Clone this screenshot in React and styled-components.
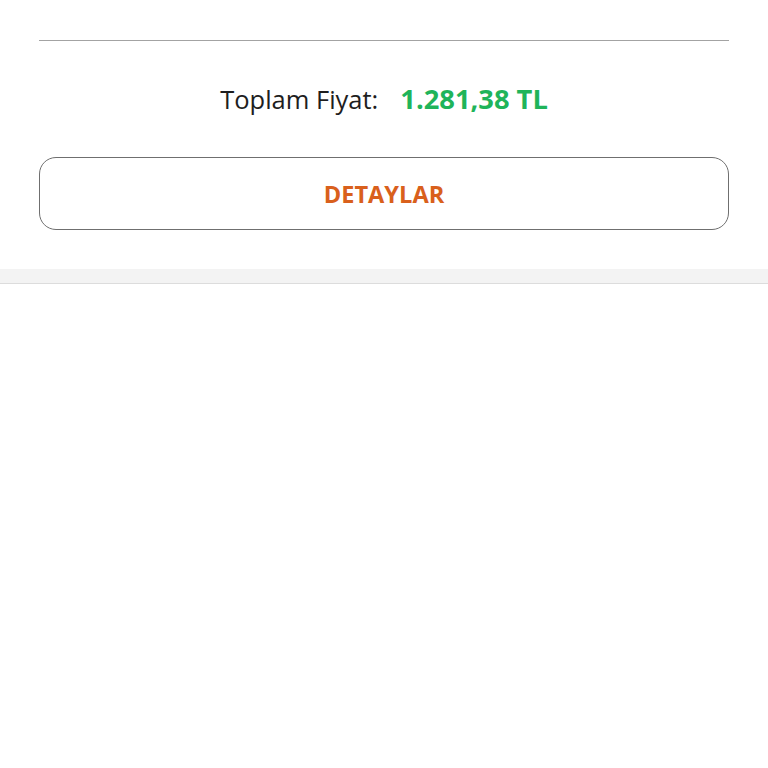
import React from "react";
import styled, { createGlobalStyle } from "styled-components";

const GlobalStyle = createGlobalStyle`
  html, body {
    margin: 0;
    padding: 0;
    background: #ffffff;
    font-family: "Open Sans", "Noto Sans", sans-serif;
  }
`;

const App = () => {
  return (
    <>
      <GlobalStyle />
      <Card>
        <Divider />
        <TotalRow>
          <TotalLabel>Toplam Fiyat:</TotalLabel>
          <TotalPrice>1.281,38 TL</TotalPrice>
        </TotalRow>
        <DetailButton>DETAYLAR</DetailButton>
      </Card>
      <Separator />
    </>
  );
};

export default App;

export const Card = styled.div`
  display: flex;
  flex-direction: column;
  padding: 40px 39px 39px;
  background: #ffffff;
`;

export const Divider = styled.div`
  height: 1px;
  background-color: #a3a3a3;
`;

export const TotalRow = styled.div`
  display: flex;
  justify-content: center;
  align-items: baseline;
  gap: 22px;
  height: 116px;
  padding-top: 40px;
  box-sizing: border-box;
`;

export const TotalLabel = styled.span`
  font-size: 25.5px;
  color: #1e1e1e;
  line-height: 36px;
`;

export const TotalPrice = styled.span`
  font-size: 27.3px;
  font-weight: 700;
  color: #1fb45a;
  line-height: 36px;
`;

export const DetailButton = styled.button`
  height: 73px;
  border: 1px solid #6f6f6f;
  border-radius: 17px;
  background: #ffffff;
  font-family: "Open Sans", "Noto Sans", sans-serif;
  font-size: 23.6px;
  font-weight: 700;
  color: #d9601c;
  cursor: pointer;
`;

export const Separator = styled.div`
  height: 14px;
  background-color: #f3f3f3;
  border-bottom: 1px solid #dcdcdc;
`;
